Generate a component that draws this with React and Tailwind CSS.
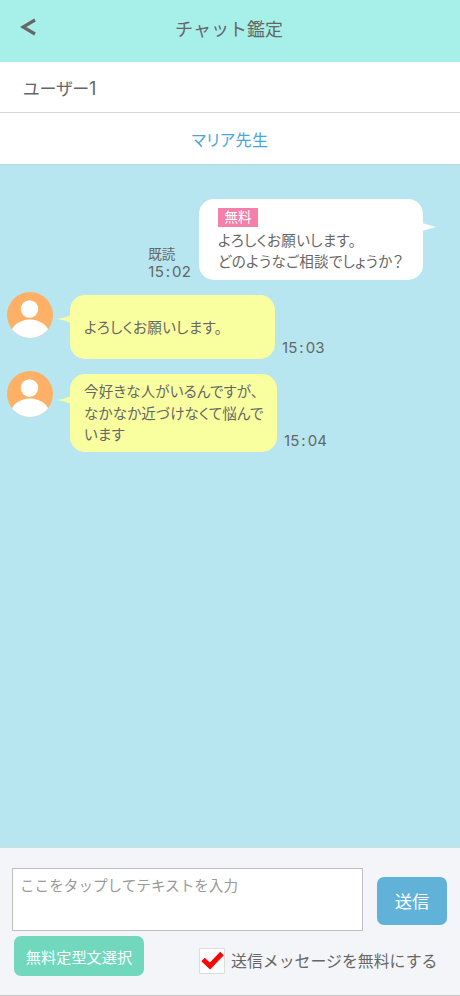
import { clsx } from 'clsx';

const Avatar = () => (
  <svg viewBox="0 0 46 46" className="w-[46px] h-[46px] shrink-0">
    <defs>
      <clipPath id="avatar-clip">
        <circle cx="23" cy="23" r="23" />
      </clipPath>
    </defs>
    <g clipPath="url(#avatar-clip)">
      <rect width="46" height="46" fill="#ffb067" />
      <circle cx="22.5" cy="17" r="8.7" fill="#fff" />
      <ellipse cx="23" cy="43" rx="19.5" ry="15.5" fill="#fff" />
    </g>
  </svg>
);

const Time = ({ value }) => {
  const [h, m] = value.split(':');
  return (
    <span className="flex font-['Inter','Noto_Sans_CJK_JP',sans-serif] text-[15px] leading-[17px] tracking-[0.2px]">
      <span>{h}</span>
      <span className="w-[8px] text-center">:</span>
      <span>{m}</span>
    </span>
  );
};

const received = [
  { lines: ['よろしくお願いします。'], time: '15:03', bubble: 'w-[205px] h-[64px] tracking-[0.35px]', tail: 'top-[20px]', row: 'mt-[15px]' },
  { lines: ['今好きな人がいるんですが、', 'なかなか近づけなくて悩んで', 'います'], time: '15:04', bubble: 'w-[207px] h-[78px] tracking-[0.2px]', tail: 'top-[22px]', row: 'mt-[14.5px]' },
];

const App = () => {
  return (
    <div className="w-full h-[996px] flex flex-col bg-[#b7e6f0] text-[#666] font-['Noto_Sans_CJK_JP',sans-serif] overflow-hidden">
      <header className="h-[62px] shrink-0 bg-[#a7f0ea] grid grid-cols-[60px_1fr_60px] items-center">
        <button className="pl-5 -mt-2">
          <svg viewBox="0 0 16 18" className="w-4 h-[18px]" fill="none" stroke="#666" strokeWidth="3.2">
            <path d="M15 2 L3 9 L15 16" />
          </svg>
        </button>
        <h1 className="-mt-[7px] -ml-[2px] text-center text-[18px] leading-6 whitespace-nowrap">チャット鑑定</h1>
      </header>

      <div className="h-[51px] shrink-0 bg-white border-b border-[#d8d8d8] px-[23px] text-[17px] leading-[51px] [font-feature-settings:'palt']">
        ユーザー<span className="font-['Inter',sans-serif] text-[18px] leading-none">1</span>
      </div>
      <div className="h-[52px] shrink-0 bg-white border-b border-[#c4d6dc] flex items-center justify-center text-[16px] tracking-[0.5px] text-[#4ba6d8] [font-feature-settings:'palt']">
        マリア先生
      </div>

      <main className="flex-1 pt-[34px]">
        {/* Sent message */}
        <div className="flex justify-end items-end pr-[37px]">
          <div className="mr-[8px]">
            <p className="text-[13.5px] leading-[20px]">既読</p>
            <Time value="15:02" />
          </div>
          <div className="relative w-[224px] h-[81px] rounded-[15px] bg-white pl-[19px] pt-[9px]">
            <span className="flex items-center justify-center w-[40px] h-[19px] pb-px bg-[#f47fa8] text-white text-[13.5px] leading-none">無料</span>
            <p className="mt-[1.5px] text-[14.5px] leading-[21.5px] tracking-[0.35px] whitespace-nowrap [font-feature-settings:'palt']">
              よろしくお願いします。<br />どのようなご相談でしょうか？
            </p>
            <svg viewBox="0 0 14 8" className="absolute -right-[13px] top-[24px] w-[14px] h-2">
              <path d="M0 0 L14 4 L0 8 Z" fill="#fff" />
            </svg>
          </div>
        </div>

        {/* Received messages */}
        {received.map((msg) => (
          <div key={msg.time} className={clsx('flex pl-[7px]', msg.row)}>
            <div className="-mt-[3px] h-[46px]">
              <Avatar />
            </div>
            <div className={clsx('relative ml-[17px] rounded-[15px] bg-[#f9ff9f] pl-[14px] flex flex-col justify-center text-[14.5px] leading-[21.5px] whitespace-nowrap', msg.bubble)}>
              {msg.lines.map((line) => (
                <p key={line} className="[font-feature-settings:'palt']">{line}</p>
              ))}
              <svg viewBox="0 0 14 8" className={clsx('absolute -left-[13px] w-[14px] h-2', msg.tail)}>
                <path d="M14 0 Q8 3 0 4 Q8 5 14 8 Z" fill="#f9ff9f" />
              </svg>
            </div>
            <div className="self-end ml-[7px] mb-[3px]">
              <Time value={msg.time} />
            </div>
          </div>
        ))}
      </main>

      <footer className="h-[149px] shrink-0 bg-[#f3f5f9] border-t border-[#ccdde3] border-b border-b-[#c8c8c8] pt-5 pl-3 pr-[13px]">
        <div className="flex items-center justify-between">
          <textarea
            className="block w-[351px] h-[63px] resize-none bg-white border border-[#bfbfbf] px-[7px] pt-[5px] text-[14.6px] leading-[22px] placeholder:text-[#999] placeholder:opacity-100 outline-none"
            placeholder="ここをタップしてテキストを入力"
          />
          <button className="mt-[3px] w-[70px] h-12 rounded-[7px] bg-[#60b2d9] text-white text-[17.3px]">送信</button>
        </div>
        <div className="mt-[5px] ml-[2px] flex items-start">
          <button className="w-[130px] h-[40px] rounded-[7px] bg-[#71d8bd] text-white text-[15.2px] whitespace-nowrap">無料定型文選択</button>
          <label className="mt-[11px] ml-[55px] flex items-center whitespace-nowrap text-[15.9px] leading-[26px]">
            <span className="w-[26px] h-[26px] mr-[6px] bg-white border border-[#ddd] rounded-[1px]">
              <svg viewBox="0 0 24 24" className="w-6 h-6" fill="none" stroke="#fb0505" strokeWidth="5">
                <path d="M3 10.5 L10 17 L22 4.5" />
              </svg>
            </span>
            <span className="pt-px">送信メッセージを無料にする</span>
          </label>
        </div>
      </footer>
    </div>
  );
};

export default App;
